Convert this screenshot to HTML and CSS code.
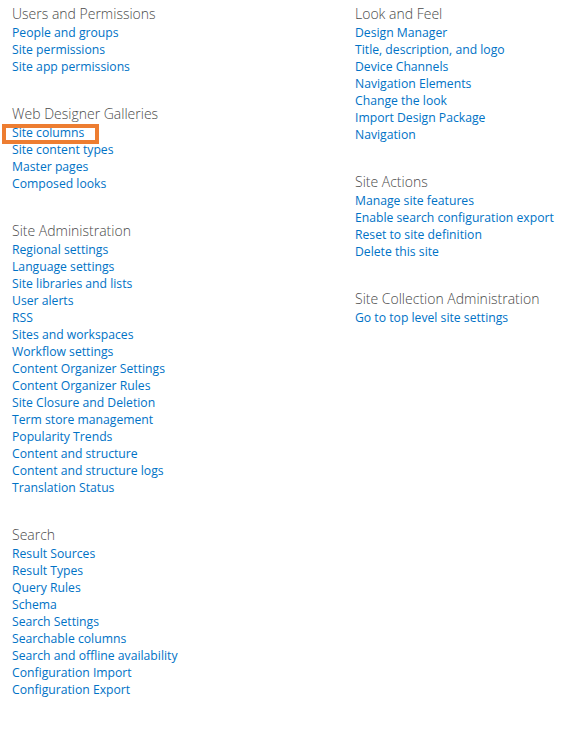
FILE: index.html
```html
<!DOCTYPE html>
<html>
<head>
<meta charset="utf-8">
<link rel="stylesheet" href="styles.css">
</head>
<body>
<div class="page">
  <div class="col">
    <section class="group">
      <h3>Users and Permissions</h3>
      <ul>
        <li><a href="#">People and groups</a></li>
        <li><a href="#">Site permissions</a></li>
        <li><a href="#">Site app permissions</a></li>
      </ul>
    </section>
    <section class="group">
      <h3>Web Designer Galleries</h3>
      <ul>
        <li><a href="#" class="hl">Site columns</a></li>
        <li><a href="#">Site content types</a></li>
        <li><a href="#">Master pages</a></li>
        <li><a href="#">Composed looks</a></li>
      </ul>
    </section>
    <section class="group">
      <h3>Site Administration</h3>
      <ul>
        <li><a href="#">Regional settings</a></li>
        <li><a href="#">Language settings</a></li>
        <li><a href="#">Site libraries and lists</a></li>
        <li><a href="#">User alerts</a></li>
        <li><a href="#">RSS</a></li>
        <li><a href="#">Sites and workspaces</a></li>
        <li><a href="#">Workflow settings</a></li>
        <li><a href="#">Content Organizer Settings</a></li>
        <li><a href="#">Content Organizer Rules</a></li>
        <li><a href="#">Site Closure and Deletion</a></li>
        <li><a href="#">Term store management</a></li>
        <li><a href="#">Popularity Trends</a></li>
        <li><a href="#">Content and structure</a></li>
        <li><a href="#">Content and structure logs</a></li>
        <li><a href="#">Translation Status</a></li>
      </ul>
    </section>
    <section class="group">
      <h3>Search</h3>
      <ul>
        <li><a href="#">Result Sources</a></li>
        <li><a href="#">Result Types</a></li>
        <li><a href="#">Query Rules</a></li>
        <li><a href="#">Schema</a></li>
        <li><a href="#">Search Settings</a></li>
        <li><a href="#">Searchable columns</a></li>
        <li><a href="#">Search and offline availability</a></li>
        <li><a href="#">Configuration Import</a></li>
        <li><a href="#">Configuration Export</a></li>
      </ul>
    </section>
  </div>
  <div class="col">
    <section class="group">
      <h3>Look and Feel</h3>
      <ul>
        <li><a href="#">Design Manager</a></li>
        <li><a href="#">Title, description, and logo</a></li>
        <li><a href="#">Device Channels</a></li>
        <li><a href="#">Navigation Elements</a></li>
        <li><a href="#">Change the look</a></li>
        <li><a href="#">Import Design Package</a></li>
        <li><a href="#">Navigation</a></li>
      </ul>
    </section>
    <section class="group">
      <h3>Site Actions</h3>
      <ul>
        <li><a href="#">Manage site features</a></li>
        <li><a href="#">Enable search configuration export</a></li>
        <li><a href="#">Reset to site definition</a></li>
        <li><a href="#">Delete this site</a></li>
      </ul>
    </section>
    <section class="group">
      <h3>Site Collection Administration</h3>
      <ul>
        <li><a href="#">Go to top level site settings</a></li>
      </ul>
    </section>
  </div>
</div>
</body>
</html>
```

FILE: styles.css
```css
html, body {
  margin: 0;
  padding: 0;
  background: #ffffff;
}
body {
  font-family: "Open Sans", "Noto Sans", sans-serif;
}
.page {
  display: grid;
  grid-template-columns: 343px 1fr;
  padding: 3px 0 0 12px;
}
.group {
  margin-bottom: 28px;
}
.group h3 {
  margin: 0;
  font-size: 14px;
  line-height: 21px;
  font-weight: 300;
  color: #4a4a4a;
}
.group ul {
  list-style: none;
  margin: 0;
  padding: 0;
}
.group li {
  font-size: 12.2px;
  line-height: 17px;
  height: 17px;
}
.group a {
  color: #0072c6;
  text-decoration: none;
}
.hl {
  position: relative;
}
.hl::after {
  content: "";
  position: absolute;
  left: -10px;
  top: 0;
  width: 97px;
  height: 20px;
  border: 4px solid #ed7d31;
  box-sizing: border-box;
}
```
